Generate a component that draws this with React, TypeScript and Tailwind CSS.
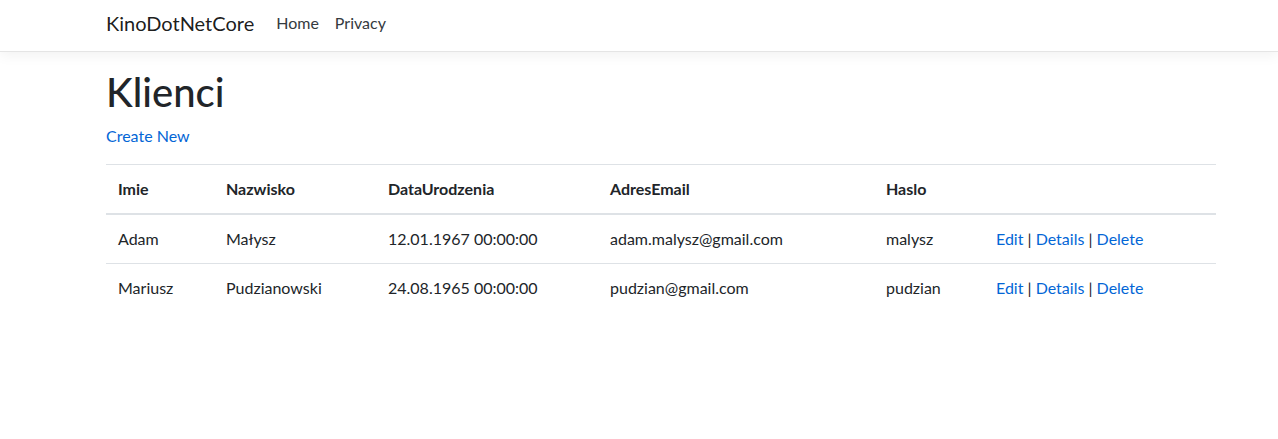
const clients = [
  {
    imie: "Adam",
    nazwisko: "Małysz",
    data: "12.01.1967 00:00:00",
    email: "adam.malysz@gmail.com",
    haslo: "malysz",
  },
  {
    imie: "Mariusz",
    nazwisko: "Pudzianowski",
    data: "24.08.1965 00:00:00",
    email: "pudzian@gmail.com",
    haslo: "pudzian",
  },
];

const font = { fontFamily: "'Segoe UI', Lato, 'Noto Sans', sans-serif" };

function Navbar() {
  return (
    <header className="h-[52px] bg-white border-b border-[#e5e5e5] shadow-[0_4px_12px_rgba(0,0,0,0.05)]">
      <nav className="ml-[106px] flex items-center h-[51px] pb-[6px]">
        <a className="text-[20px] text-black/90 mr-[14px]">KinoDotNetCore</a>
        <a className="px-2 text-[16px] text-[#343a40]">Home</a>
        <a className="px-2 text-[16px] text-[#343a40]">Privacy</a>
      </nav>
    </header>
  );
}

export default function App() {
  const th = "px-3 py-3 text-left font-bold border-t border-b-2 border-[#dee2e6] align-bottom";
  const td = "px-3 py-3 border-t border-[#dee2e6] align-top";

  return (
    <div className="min-h-screen bg-white text-[#212529] text-[16px] leading-6" style={font}>
      <Navbar />
      <main className="ml-[106px] w-[1110px] mt-4">
        <h1 className="text-[40px] leading-[48px] font-medium mb-2">Klienci</h1>
        <p className="mb-4">
          <a className="text-[#0366d6]">Create New</a>
        </p>
        <table className="w-full border-collapse">
          <thead>
            <tr>
              <th className={`${th} w-[108px]`}>Imie</th>
              <th className={`${th} w-[162px]`}>Nazwisko</th>
              <th className={`${th} w-[222px]`}>DataUrodzenia</th>
              <th className={`${th} w-[276px]`}>AdresEmail</th>
              <th className={`${th} w-[110px]`}>Haslo</th>
              <th className={th}></th>
            </tr>
          </thead>
          <tbody>
            {clients.map((c) => (
              <tr key={c.email}>
                <td className={td}>{c.imie}</td>
                <td className={td}>{c.nazwisko}</td>
                <td className={td}>{c.data}</td>
                <td className={td}>{c.email}</td>
                <td className={td}>{c.haslo}</td>
                <td className={td}>
                  <a className="text-[#0366d6]">Edit</a> |{" "}
                  <a className="text-[#0366d6]">Details</a> |{" "}
                  <a className="text-[#0366d6]">Delete</a>
                </td>
              </tr>
            ))}
          </tbody>
        </table>
      </main>
    </div>
  );
}
